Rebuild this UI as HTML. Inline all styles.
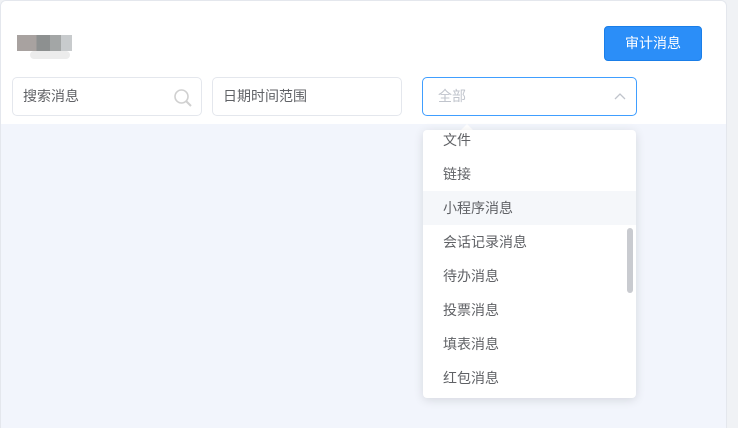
<!DOCTYPE html><html><head><meta charset="utf-8"><style>
html,body{margin:0;width:738px;height:428px;overflow:hidden}
body{background:#f0f2f5;font-family:"Liberation Sans","Noto Sans CJK SC",sans-serif;position:relative}
.card{position:absolute;left:0;top:0;width:727px;height:428px;background:#f2f5fc;border:1px solid #e4e7ed;border-bottom:0;box-sizing:border-box;border-radius:6px 6px 0 0;overflow:hidden}
.top{position:absolute;left:0;top:0;width:727px;height:123px;background:#fff}
.in{position:absolute;top:77px;height:39px;border:1px solid #e4e7ed;border-radius:5px;box-sizing:border-box;font-size:14px;color:#606266;line-height:37px;padding-left:10px;background:#fff}
.btn{position:absolute;left:604px;top:26px;width:98px;height:35px;background:#2b8ef8;border:1px solid #1a7ee8;box-sizing:border-box;border-radius:4px;color:#fff;font-size:14px;text-align:center;line-height:33px}
.dd{position:absolute;left:423px;top:130px;width:213px;height:268px;background:#fff;border-radius:4px;box-shadow:0 2px 10px rgba(0,0,0,.12);overflow:hidden}
.it{position:absolute;left:0;width:213px;height:34px;line-height:34px;padding-left:20px;box-sizing:border-box;font-size:14px;color:#606266}
</style></head><body>
<div class="card"><div class="top"></div></div>
<div style="position:absolute;left:17px;top:35px;width:55px;height:16px;background:linear-gradient(90deg,#a8a2a0 0,#a8a2a0 35%,#8d9090 35%,#8d9090 60%,#a3a6a6 60%,#a3a6a6 80%,#c8cbcd 80%)"></div>
<div style="position:absolute;left:30px;top:51px;width:40px;height:8px;background:#ececec;border-radius:4px"></div>
<div class="btn">审计消息</div>
<div class="in" style="left:12px;width:190px">搜索消息
<svg style="position:absolute;right:8px;top:10px" width="20" height="20" viewBox="0 0 20 20"><circle cx="8.5" cy="8.5" r="6.5" fill="none" stroke="#d0d0d0" stroke-width="1.6"/><path d="M13 13l5 5" stroke="#d0d0d0" stroke-width="2"/></svg></div>
<div class="in" style="left:212px;width:190px">日期时间范围</div>
<div class="in" style="left:422px;width:215px;border-color:#409eff;color:#c0c4cc;padding-left:15px">全部
<svg style="position:absolute;right:10px;top:14px" width="12" height="8" viewBox="0 0 12 8"><path d="M1 7l5-5 5 5" fill="none" stroke="#c0c4cc" stroke-width="1.3"/></svg></div>
<div style="position:absolute;left:461px;top:124px;width:0;height:0;border:6px solid transparent;border-bottom-color:#fff;border-top:0"></div>
<div class="dd">
<div class="it" style="top:-7px">文件</div>
<div class="it" style="top:27px">链接</div>
<div class="it" style="top:61px;background:#f5f7fa">小程序消息</div>
<div class="it" style="top:95px">会话记录消息</div>
<div class="it" style="top:129px">待办消息</div>
<div class="it" style="top:163px">投票消息</div>
<div class="it" style="top:197px">填表消息</div>
<div class="it" style="top:231px">红包消息</div>
<div style="position:absolute;left:204px;top:98px;width:6px;height:65px;background:#c9cbd0;border-radius:3px"></div>
</div>
</body></html>
